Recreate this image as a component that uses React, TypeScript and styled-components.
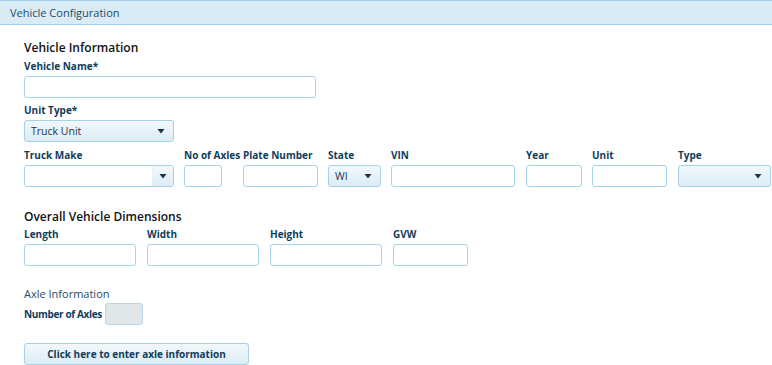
import styled, { createGlobalStyle } from "styled-components"

const GlobalStyle = createGlobalStyle`
    html, body {
        margin: 0;
        padding: 0;
        background: #ffffff;
        width: 772px;
        height: 365px;
        overflow: hidden;
    }
    body {
        font-family: "Open Sans", "DejaVu Sans", sans-serif;
    }
`

type Field = { label: string; w: number; kind?: "text" | "select" | "combo"; value?: string }

const vehicleRow: Field[] = [
    { label: "Truck Make", w: 150, kind: "combo" },
    { label: "No of Axles", w: 38 },
    { label: "Plate Number", w: 75 },
    { label: "State", w: 53, kind: "select", value: "WI" },
    { label: "VIN", w: 124 },
    { label: "Year", w: 56 },
    { label: "Unit", w: 75 },
    { label: "Type", w: 93, kind: "select" },
]

const dimensions = ["Length", "Width", "Height", "GVW"]

function Arrow() {
    return (
        <svg width="8" height="5" viewBox="0 0 8 5">
            <path d="M0.5 0 L7.5 0 L4 4.5 Z" fill="#1d3447" />
        </svg>
    )
}

function Control({ f }: { f: Field }) {
    if (f.kind === "select") {
        return (
            <Select style={{ width: f.w }}>
                <span>{f.value}</span>
                <Arrow />
            </Select>
        )
    }
    if (f.kind === "combo") {
        return (
            <Combo style={{ width: f.w }}>
                <ComboButton><Arrow /></ComboButton>
            </Combo>
        )
    }
    return <Input style={{ width: f.w }} />
}

export default function App() {
    return (
        <>
            <GlobalStyle />
            <Panel>
                <Header>Vehicle Configuration</Header>
                <Body>
                    <SectionTitle>Vehicle Information</SectionTitle>
                    <Label>Vehicle Name*</Label>
                    <Input style={{ width: 292 }} />
                    <Label $top={5}>Unit Type*</Label>
                    <Select style={{ width: 150 }}>
                        <span>Truck Unit</span>
                        <Arrow />
                    </Select>
                    <FieldRow>
                        {vehicleRow.map((f) => (
                            <FieldCol key={f.label}>
                                <Label $top={0}>{f.label}</Label>
                                <Control f={f} />
                            </FieldCol>
                        ))}
                    </FieldRow>

                    <SectionTitle $top={22}>Overall Vehicle Dimensions</SectionTitle>
                    <DimRow>
                        {dimensions.map((d) => (
                            <FieldCol key={d}>
                                <Label $top={0}>{d}</Label>
                                <Input style={{ width: d === "GVW" ? 75 : 112 }} />
                            </FieldCol>
                        ))}
                    </DimRow>

                    <SubTitle>Axle Information</SubTitle>
                    <AxleRow>
                        <Label $top={0} $tight>Number of Axles</Label>
                        <ReadOnlyBox />
                    </AxleRow>
                    <Button>Click here to enter axle information</Button>
                </Body>
            </Panel>
        </>
    )
}

const Panel = styled.div`
    width: 772px;
    height: 365px;
`

const Header = styled.div`
    height: 23px;
    border-top: 1px solid #9fd0e7;
    border-bottom: 1px solid #9fd0e7;
    background-color: #d9ebf5;
    color: #1f4b66;
    font-size: 11px;
    line-height: 23px;
    padding-left: 10px;
`

const Body = styled.div`
    padding: 15px 0 0 24px;
    display: flex;
    flex-direction: column;
    align-items: flex-start;
`

const SectionTitle = styled.div<{ $top?: number }>`
    font-size: 12px;
    font-weight: 600;
    color: #111;
    margin-top: ${(p) => p.$top ?? 0}px;
    line-height: 16px;
`

const SubTitle = styled.div`
    font-size: 11px;
    color: #1f4b66;
    margin-top: 21px;
    line-height: 14px;
`

const Label = styled.div<{ $top?: number; $tight?: boolean }>`
    font-size: 10px;
    font-weight: 700;
    color: #0f3d5a;
    line-height: 14px;
    margin-top: ${(p) => p.$top ?? 3}px;
    margin-bottom: ${(p) => (p.$tight ? 0 : 3)}px;
    letter-spacing: ${(p) => (p.$tight ? "-0.35px" : "0")};
    white-space: nowrap;
`

const Input = styled.div`
    box-sizing: border-box;
    height: 22px;
    border: 1px solid #a6d2e6;
    border-radius: 3px;
    background: #fff;
`

const Select = styled.div`
    box-sizing: border-box;
    height: 22px;
    border: 1px solid #a6d2e6;
    border-radius: 3px;
    background: linear-gradient(#f2f8fb, #dcecf5);
    display: flex;
    align-items: center;
    justify-content: space-between;
    padding: 0 8px 0 6px;
    font-size: 10.5px;
    color: #1d3447;
`

const Combo = styled.div`
    box-sizing: border-box;
    height: 22px;
    border: 1px solid #a6d2e6;
    border-radius: 3px;
    background: #fff;
    display: flex;
    justify-content: flex-end;
    overflow: hidden;
`

const ComboButton = styled.div`
    width: 21px;
    background: linear-gradient(#f2f8fb, #dcecf5);
    display: flex;
    align-items: center;
    justify-content: center;
`

const FieldRow = styled.div`
    display: grid;
    grid-template-columns: 150px 49px 75px 53px 125px 56px 76px 93px;
    column-gap: 10px;
    margin-top: 6px;
`

const FieldCol = styled.div`
    display: flex;
    flex-direction: column;
    align-items: flex-start;
`

const DimRow = styled.div`
    display: grid;
    grid-template-columns: 112px 112px 112px 75px;
    column-gap: 11px;
    margin-top: 2px;
`

const AxleRow = styled.div`
    display: flex;
    align-items: center;
    gap: 3px;
    margin-top: 2px;
`

const ReadOnlyBox = styled.div`
    box-sizing: border-box;
    width: 38px;
    height: 22px;
    border: 1px solid #b5d7e7;
    border-radius: 3px;
    background: #e1e6e9;
`

const Button = styled.div`
    box-sizing: border-box;
    width: 225px;
    height: 22px;
    margin-top: 18px;
    border: 1px solid #a6d2e6;
    border-radius: 3px;
    background: linear-gradient(#f2f8fb, #dcecf5);
    display: flex;
    align-items: center;
    justify-content: center;
    font-size: 10px;
    font-weight: 700;
    color: #0f3d5a;
`
